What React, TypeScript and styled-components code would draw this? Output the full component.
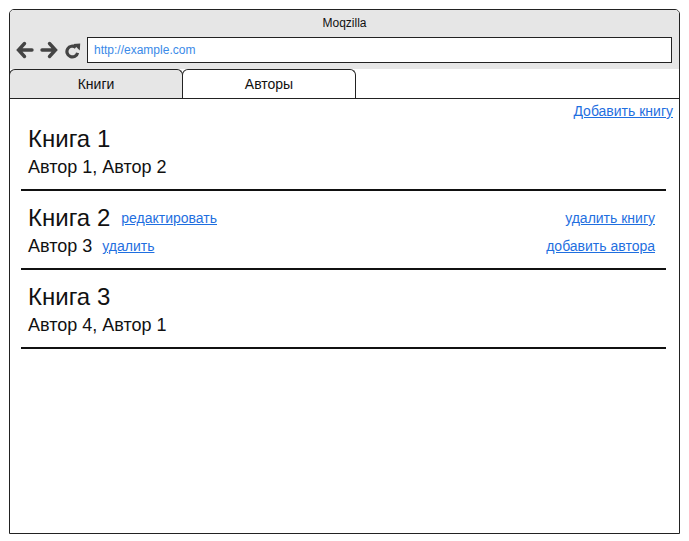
import React from "react";
import styled, { createGlobalStyle } from "styled-components";

const Global = createGlobalStyle`
  html, body { margin: 0; padding: 0; background: #fff; }
  body { font-family: "Liberation Sans", Arial, sans-serif; color: #111; }
`;

const Page = styled.div`
  padding: 9px 0 0 9px;
`;

const Frame = styled.div`
  width: 671px;
  height: 525px;
  box-sizing: border-box;
  border: 1px solid #222;
  border-radius: 5px 5px 0 0;
  display: flex;
  flex-direction: column;
  overflow: hidden;
`;

const Header = styled.div`
  background: #e6e6e6;
  border-bottom: 1px solid #222;
  display: flex;
  flex-direction: column;
`;

const Title = styled.div`
  height: 24px;
  line-height: 26px;
  text-align: center;
  font-size: 12px;
  color: #111;
`;

const AddressRow = styled.div`
  display: flex;
  align-items: center;
  padding: 3px 7px 6px 6px;
  gap: 6px;
`;

const NavIcon = styled.svg`
  display: block;
  flex: none;
`;

const UrlBox = styled.div`
  flex: 1;
  height: 26px;
  box-sizing: border-box;
  border: 1px solid #222;
  background: #fff;
  display: flex;
  align-items: center;
  padding-left: 6px;
  font-size: 12px;
  color: #3a8ae8;
`;

const TabBar = styled.div`
  display: flex;
  margin-top: -1px;
  border-bottom: 1px solid #222;
  background: #fff;
`;

const Tab = styled.div<{ $active?: boolean }>`
  width: 174px;
  height: 29px;
  box-sizing: border-box;
  margin-left: -1px;
  border: 1px solid #222;
  border-bottom: none;
  border-radius: 6px 6px 0 0;
  background: ${(p) => (p.$active ? "#e6e6e6" : "#fff")};
  display: flex;
  align-items: center;
  justify-content: center;
  font-size: 14px;
  color: #111;
`;

const Content = styled.div`
  flex: 1;
  display: flex;
  flex-direction: column;
  padding: 0 6px 0 11px;
`;

const AddRow = styled.div`
  display: flex;
  justify-content: flex-end;
  padding-top: 3px;
  height: 18px;
`;

const Link = styled.a`
  color: #1f6fe0;
  text-decoration: underline;
  font-size: 14px;
  line-height: 18px;
  cursor: pointer;
`;

const List = styled.div`
  display: flex;
  flex-direction: column;
  margin-right: 7px;
`;

const Book = styled.div<{ $first?: boolean }>`
  padding: ${(p) => (p.$first ? 4 : 12)}px 11px 9px 7px;
  border-bottom: 2px solid #111;
  display: flex;
  flex-direction: column;
`;

const Line = styled.div<{ $tall?: boolean }>`
  display: flex;
  align-items: center;
  height: ${(p) => (p.$tall ? 30 : 26)}px;
  line-height: ${(p) => (p.$tall ? 30 : 26)}px;
`;

const BookTitle = styled.span`
  font-size: 24px;
  color: #111;
`;

const Authors = styled.span`
  font-size: 18px;
  color: #111;
`;

const InlineLink = styled(Link)<{ $gap: number }>`
  margin-left: ${(p) => p.$gap}px;
`;

const Spacer = styled.span`
  flex: 1;
`;

const ArrowLeft = () => (
  <NavIcon width="18" height="18" viewBox="0 0 18 18">
    <path d="M8.5 2.5 L2.5 9 L8.5 15.5 M3 9 H16" fill="none" stroke="#444" strokeWidth="3.4" strokeLinejoin="miter" strokeLinecap="round" />
  </NavIcon>
);

const ArrowRight = () => (
  <NavIcon width="18" height="18" viewBox="0 0 18 18">
    <path d="M9.5 2.5 L15.5 9 L9.5 15.5 M15 9 H2" fill="none" stroke="#444" strokeWidth="3.4" strokeLinejoin="miter" strokeLinecap="round" />
  </NavIcon>
);

const Reload = () => (
  <NavIcon width="17" height="17" viewBox="0 0 17 17">
    <path d="M13.6 10.8 A5.4 5.4 0 1 1 11.8 5.4" fill="none" stroke="#444" strokeWidth="3.2" />
    <path d="M9.2 2 L16.2 1.6 L15.8 8.6 Z" fill="#444" />
  </NavIcon>
);

export default function App() {
  return (
    <>
      <Global />
      <Page>
        <Frame>
          <Header>
            <Title>Moqzilla</Title>
            <AddressRow>
              <ArrowLeft />
              <ArrowRight />
              <Reload />
              <UrlBox>http://example.com</UrlBox>
            </AddressRow>
          </Header>
          <TabBar>
            <Tab $active>Книги</Tab>
            <Tab>Авторы</Tab>
          </TabBar>
          <Content>
            <AddRow>
              <Link>Добавить книгу</Link>
            </AddRow>
            <List>
              <Book $first>
                <Line $tall>
                  <BookTitle>Книга 1</BookTitle>
                </Line>
                <Line>
                  <Authors>Автор 1, Автор 2</Authors>
                </Line>
              </Book>
              <Book>
                <Line $tall>
                  <BookTitle>Книга 2</BookTitle>
                  <InlineLink $gap={11}>редактировать</InlineLink>
                  <Spacer />
                  <Link>удалить книгу</Link>
                </Line>
                <Line>
                  <Authors>Автор 3</Authors>
                  <InlineLink $gap={10}>удалить</InlineLink>
                  <Spacer />
                  <Link>добавить автора</Link>
                </Line>
              </Book>
              <Book>
                <Line $tall>
                  <BookTitle>Книга 3</BookTitle>
                </Line>
                <Line>
                  <Authors>Автор 4, Автор 1</Authors>
                </Line>
              </Book>
            </List>
          </Content>
        </Frame>
      </Page>
    </>
  );
}
